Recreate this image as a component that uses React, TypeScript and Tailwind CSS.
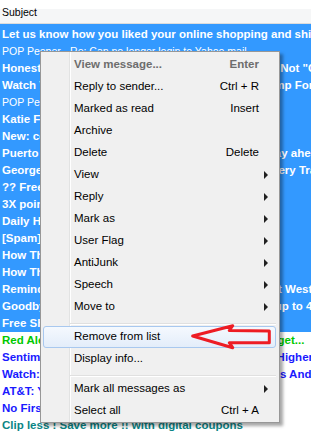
import React from "react";

type Row = { text: string; bold?: boolean; color?: string };

const selectedRows: Row[] = [
  { text: "Let us know how you liked your online shopping and shipping experience", bold: true },
  { text: "POP Peeper - Re: Can no longer login to Yahoo mail" },
  { text: 'Honest Company Review: Why Their Products Are Not "Clean"', bold: true },
  { text: "Watch Video: How to Replace Basement Sump Pump For Less", bold: true },
  { text: "POP Peeper - Re: Account settings for Gmail" },
  { text: "Katie Ford shared a photo with you", bold: true },
  { text: "New: collection of spring styles", bold: true },
  { text: "Puerto Rico Travel Deals: Book A Trip Now And Stay ahead", bold: true },
  { text: "George Washington's Mount Vernon Estate Discovery Trail", bold: true },
  { text: "?? Free Shipping on all orders", bold: true },
  { text: "3X points on every purchase", bold: true },
  { text: "Daily Horoscope for Tuesday", bold: true },
  { text: "[Spam] You have won a gift card", bold: true },
  { text: "How The Fed Decision Affects You", bold: true },
  { text: "How This Simple Trick Saves Money", bold: true },
  { text: "Reminder: Your Ticket for the Upcoming Concert at Westfield", bold: true },
  { text: "Goodbye Winter, Hello Spring! Sale Now On Save up to 40%", bold: true },
  { text: "Free Shipping Weekend - Today Only", bold: true },
];

const otherRows: Row[] = [
  { text: "Red Alert: Last Chance Sale You Don't Want to Forget...", bold: true, color: "text-[#00c800]" },
  { text: "Sentiment Survey: Shoppers Expect Prices To Go Higher", bold: true, color: "text-[#1a1aff]" },
  { text: "Watch: This Week's Top 5 Hot Kitchen Gadget Deals And Steals", bold: true, color: "text-[#1a1aff]" },
  { text: "AT&T: Your monthly statement is ready", bold: true, color: "text-[#1a1aff]" },
  { text: "No First Payment for 90 Days", bold: true, color: "text-[#1a1aff]" },
  { text: "Clip less ! Save more !! with digital coupons", bold: true, color: "text-[#0a8585]" },
];

type Item =
  | { kind: "item"; label: string; shortcut?: string; sub?: boolean; def?: boolean; hover?: boolean }
  | { kind: "sep" };

const menu: Item[] = [
  { kind: "item", label: "View message...", shortcut: "Enter", def: true },
  { kind: "item", label: "Reply to sender...", shortcut: "Ctrl + R" },
  { kind: "item", label: "Marked as read", shortcut: "Insert" },
  { kind: "item", label: "Archive" },
  { kind: "item", label: "Delete", shortcut: "Delete" },
  { kind: "item", label: "View", sub: true },
  { kind: "item", label: "Reply", sub: true },
  { kind: "item", label: "Mark as", sub: true },
  { kind: "item", label: "User Flag", sub: true },
  { kind: "item", label: "AntiJunk", sub: true },
  { kind: "item", label: "Speech", sub: true },
  { kind: "item", label: "Move to", sub: true },
  { kind: "sep" },
  { kind: "item", label: "Remove from list", hover: true },
  { kind: "item", label: "Display info..." },
  { kind: "sep" },
  { kind: "item", label: "Mark all messages as", sub: true },
  { kind: "item", label: "Select all", shortcut: "Ctrl + A" },
];

const ListRow = ({ row, focused }: { row: Row; focused?: boolean }) => (
  <div
    className={`relative h-[17px] pl-[2px] leading-[17px] whitespace-nowrap overflow-hidden ${
      row.bold ? "font-bold text-[11.5px]" : "text-[10.5px]"
    } ${row.color ?? ""}`}
  >
    {row.text}
    {focused && (
      <span className="absolute inset-x-0 -top-[1px] -bottom-[1px] border-y border-dotted border-[#cc6600]" />
    )}
  </div>
);

const MenuItem = ({ item }: { item: Extract<Item, { kind: "item" }> }) => (
  <div
    className={`relative ml-[2px] mr-[3px] h-[22px] flex items-center pl-[30px] pr-[16px] rounded-[3px] border ${
      item.hover
        ? "border-[#a8c8ef] bg-gradient-to-b from-[#f5f9fe] to-[#e3edfa]"
        : "border-transparent"
    } ${item.def ? "font-bold text-[#6d6d6d]" : "text-black"}`}
  >
    <span className="flex-1">{item.label}</span>
    {item.shortcut && <span>{item.shortcut}</span>}
    {item.sub && (
      <svg className="absolute right-[7px] top-[6px]" width="4" height="8" viewBox="0 0 4 8">
        <path d="M0 0 L4 4 L0 8 Z" fill="#202020" />
      </svg>
    )}
  </div>
);

export default function App() {
  return (
    <div className="relative w-[311px] h-[437px] overflow-hidden bg-white font-['Liberation_Sans',Arial,sans-serif]">
      <div className="h-[24px] flex items-center pl-[2px] pt-[2px] text-[10.5px] text-black border-b border-[#dcdcdc] bg-[linear-gradient(to_bottom,#ffffff_40%,#f5f6f7_40%)]">
        Subject
      </div>
      <div className="bg-[#3399ff] text-white pt-[2px]">
        {selectedRows.map((r, i) => (
          <ListRow key={i} row={r} focused={i === 0} />
        ))}
      </div>
      <div>
        {otherRows.map((r, i) => (
          <ListRow key={i} row={r} />
        ))}
      </div>

      <div className="absolute left-[40px] top-[51px] w-[240px] border border-[#979797] bg-[#f0f0f0] pt-[2px] text-[11.5px] shadow-[3px_3px_3px_rgba(0,0,0,0.35)]">
        <div className="absolute left-[28px] top-0 bottom-0 w-[2px] border-l border-[#e2e3e3] border-r border-r-white" />
        {menu.map((it, i) =>
          it.kind === "sep" ? (
            <div key={i} className="relative h-[8px] pt-[5px] ml-[29px] mr-[3px]">
              <div className="h-px bg-[#e0e0e0]" />
              <div className="h-px bg-white" />
            </div>
          ) : (
            <MenuItem key={i} item={it} />
          )
        )}
        <svg className="absolute left-[149px] top-[272px]" width="82" height="26" viewBox="0 0 82 26">
          <path
            d="M2.7 12 L42.7 1.7 L39.3 6.5 L79.3 7 L79.3 18.7 L39.3 18.7 L42.7 23.7 Z"
            fill="none"
            stroke="#ed1c24"
            strokeWidth="3"
            strokeLinejoin="round"
          />
        </svg>
      </div>
    </div>
  );
}
